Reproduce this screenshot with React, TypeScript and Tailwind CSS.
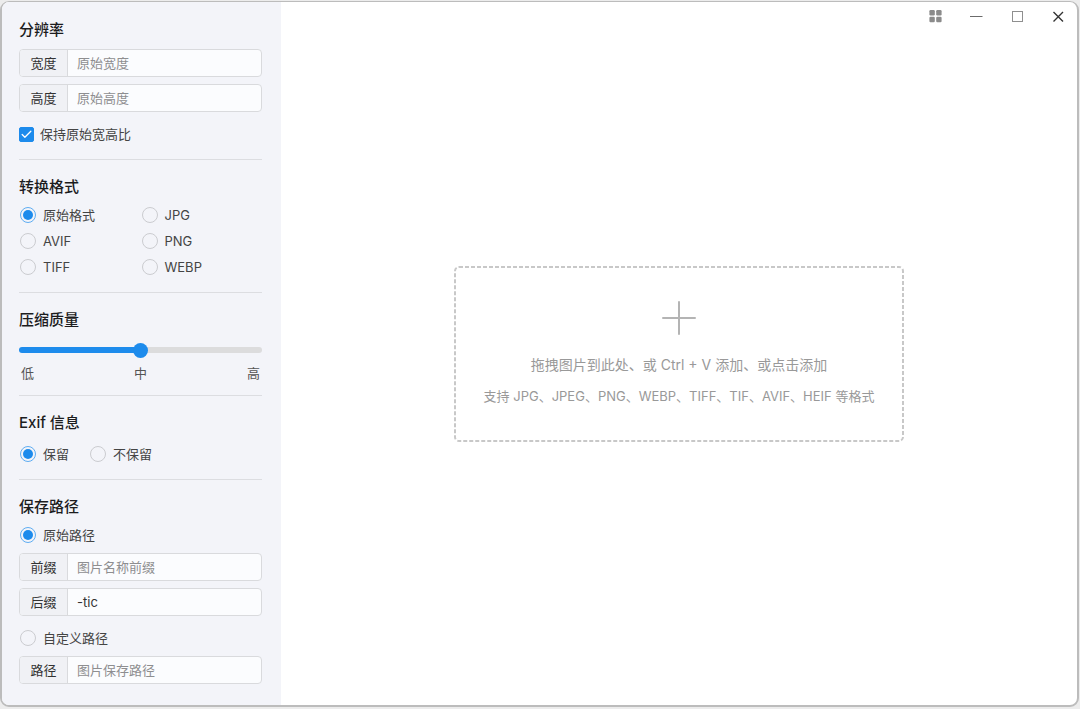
import React, { useState } from 'react';
import { Check } from 'lucide-react';

type Format = 'origin' | 'jpg' | 'avif' | 'png' | 'tiff' | 'webp';

const FORMATS: { value: Format; label: string }[] = [
  { value: 'origin', label: '原始格式' },
  { value: 'jpg', label: 'JPG' },
  { value: 'avif', label: 'AVIF' },
  { value: 'png', label: 'PNG' },
  { value: 'tiff', label: 'TIFF' },
  { value: 'webp', label: 'WEBP' },
];

interface SectionProps {
  title: string;
  last?: boolean;
  children: React.ReactNode;
}

const Section: React.FC<SectionProps> = ({ title, last, children }) => (
  <section className={last ? 'pt-[17px]' : 'border-b border-[#dcdde1] pt-[17px] pb-3'}>
    <h2 className="text-[15px] leading-5 font-medium text-[#1c1c1e]">{title}</h2>
    {children}
  </section>
);

interface FieldProps {
  id: string;
  label: string;
  placeholder?: string;
  value: string;
  onChange: (value: string) => void;
}

const Field: React.FC<FieldProps> = ({ id, label, placeholder, value, onChange }) => (
  <div className="flex h-7 overflow-hidden rounded border border-[#d9dadd] bg-[#fbfcfe]">
    <label
      htmlFor={id}
      className="flex w-12 shrink-0 items-center justify-center border-r border-[#d9dadd] bg-[#f0f1f5] text-[#333]"
    >
      {label}
    </label>
    <input
      id={id}
      type="text"
      value={value}
      placeholder={placeholder}
      onChange={(e) => onChange(e.target.value)}
      className="min-w-0 flex-1 bg-transparent px-[9px] text-[#333] outline-none placeholder:text-[#8e8e90]"
    />
  </div>
);

interface RadioProps {
  name: string;
  label: string;
  checked: boolean;
  onSelect: () => void;
}

const Radio: React.FC<RadioProps> = ({ name, label, checked, onSelect }) => (
  <label className="flex h-[26px] items-center gap-[7px] pl-px text-[#444]">
    <input
      type="radio"
      name={name}
      checked={checked}
      onChange={onSelect}
      className="size-4 shrink-0 appearance-none rounded-full border border-[#cbccd0] bg-clip-content p-[2px] checked:border-[#5fadf2] checked:bg-[#1d8bec]"
    />
    {label}
  </label>
);

const WindowButtons: React.FC = () => (
  <header className="flex h-7 shrink-0 justify-end">
    <button aria-label="更多" className="flex w-[41px] items-center justify-center">
      <svg width="16" height="14" viewBox="0 0 16 14" fill="#8b8b8b">
        <rect x="3.4" y="1" width="5.4" height="5.4" rx="1.2" />
        <rect x="10.2" y="1" width="5.4" height="5.4" rx="1.2" />
        <rect x="3.4" y="7.8" width="5.4" height="5.4" rx="1.2" />
        <rect x="10.2" y="7.8" width="5.4" height="5.4" rx="1.2" />
      </svg>
    </button>
    <button aria-label="最小化" className="flex w-[41px] items-center justify-center">
      <svg width="16" height="14" viewBox="0 0 16 14" stroke="#6b6b6b">
        <path d="M3 7.5h12.5" />
      </svg>
    </button>
    <button aria-label="最大化" className="flex w-[41px] items-center justify-center">
      <svg width="14" height="14" viewBox="0 0 14 14" fill="none" stroke="#8f8f8f">
        <rect x="3.5" y="2.5" width="10" height="10" />
      </svg>
    </button>
    <button aria-label="关闭" className="flex w-[41px] items-center justify-center">
      <svg width="14" height="14" viewBox="0 0 14 14" stroke="#333" strokeWidth="1.4">
        <path d="M3.5 3l9.5 9.5M13 3l-9.5 9.5" />
      </svg>
    </button>
  </header>
);

export default function App() {
  const [width, setWidth] = useState('');
  const [height, setHeight] = useState('');
  const [keepRatio, setKeepRatio] = useState(true);
  const [format, setFormat] = useState<Format>('origin');
  const [quality, setQuality] = useState(50);
  const [keepExif, setKeepExif] = useState(true);
  const [customPath, setCustomPath] = useState(false);
  const [prefix, setPrefix] = useState('');
  const [suffix, setSuffix] = useState('-tic');
  const [path, setPath] = useState('');

  return (
    <div className="flex min-h-screen bg-[#ececec] pt-px pr-px pb-[2px] font-['Inter','Noto_Sans_CJK_SC',sans-serif] text-[13px] leading-5">
      <div className="flex flex-1 overflow-hidden rounded-[9px] border-2 border-t-[1px] border-[#bcbcbc] bg-white">
        {/* Settings */}
        <aside className="w-[279px] shrink-0 bg-[#f3f4f9] pt-px pr-[19px] pb-5 pl-[17px]">
          <Section title="分辨率">
            <div className="mt-[9px] space-y-[7px]">
              <Field id="width" label="宽度" placeholder="原始宽度" value={width} onChange={setWidth} />
              <Field id="height" label="高度" placeholder="原始高度" value={height} onChange={setHeight} />
            </div>
            <label className="mt-[9px] flex h-[26px] items-center gap-1.5 text-[#444]">
              <span className="relative flex">
                <input
                  type="checkbox"
                  checked={keepRatio}
                  onChange={(e) => setKeepRatio(e.target.checked)}
                  className="size-[15px] appearance-none rounded-xs border border-[#cbccd0] checked:border-[#1d8bec] checked:bg-[#1d8bec]"
                />
                {keepRatio && (
                  <Check className="pointer-events-none absolute inset-0 m-auto size-[13px] text-white" strokeWidth={2.4} />
                )}
              </span>
              保持原始宽高比
            </label>
          </Section>

          <Section title="转换格式">
            <div className="mt-[5px] grid grid-cols-2">
              {FORMATS.map((item) => (
                <Radio
                  key={item.value}
                  name="format"
                  label={item.label}
                  checked={format === item.value}
                  onSelect={() => setFormat(item.value)}
                />
              ))}
            </div>
          </Section>

          <Section title="压缩质量">
            <input
              type="range"
              min={0}
              max={100}
              value={quality}
              aria-label="压缩质量"
              onChange={(e) => setQuality(Number(e.target.value))}
              style={{ backgroundSize: `${quality}% 100%` }}
              className="mt-[17px] block h-1.5 w-full appearance-none rounded-full bg-[#dcdcdd] bg-linear-to-r from-[#1d8bec] to-[#1d8bec] bg-no-repeat outline-none [&::-webkit-slider-thumb]:size-[15px] [&::-webkit-slider-thumb]:appearance-none [&::-webkit-slider-thumb]:rounded-full [&::-webkit-slider-thumb]:bg-[#1d8bec]"
            />
            <div className="mt-[10px] flex justify-between px-0.5 text-[#555]">
              <span>低</span>
              <span>中</span>
              <span>高</span>
            </div>
          </Section>

          <Section title="Exif 信息">
            <div className="mt-2 flex gap-5">
              <Radio name="exif" label="保留" checked={keepExif} onSelect={() => setKeepExif(true)} />
              <Radio name="exif" label="不保留" checked={!keepExif} onSelect={() => setKeepExif(false)} />
            </div>
          </Section>

          <Section title="保存路径" last>
            <div className="mt-[5px]">
              <Radio name="path" label="原始路径" checked={!customPath} onSelect={() => setCustomPath(false)} />
            </div>
            <div className="mt-[5px] mb-[9px] space-y-[7px]">
              <Field id="prefix" label="前缀" placeholder="图片名称前缀" value={prefix} onChange={setPrefix} />
              <Field id="suffix" label="后缀" value={suffix} onChange={setSuffix} />
            </div>
            <Radio name="path" label="自定义路径" checked={customPath} onSelect={() => setCustomPath(true)} />
            <div className="mt-[5px]">
              <Field id="path" label="路径" placeholder="图片保存路径" value={path} onChange={setPath} />
            </div>
          </Section>
        </aside>

        {/* Drop area */}
        <main className="flex min-w-0 flex-1 flex-col">
          <WindowButtons />
          <div className="flex flex-1 items-center justify-center pb-7">
            <button className="relative flex h-44 w-[450px] max-w-full flex-col items-center justify-center text-[#999]">
              {/* border-dashed leaves the gaps too wide at this weight */}
              <svg className="absolute inset-0 size-full" fill="none" stroke="#c8c8c8" strokeWidth="2" strokeDasharray="4 2">
                <rect className="h-[174px] w-[calc(100%-2px)]" x="1" y="1" rx="4" />
              </svg>
              <svg width="34" height="34" viewBox="0 0 34 34" stroke="#b4b4b4" strokeWidth="2" strokeLinecap="round">
                <path d="M17 1v32M1 17h32" />
              </svg>
              <span className="mt-5 text-sm">拖拽图片到此处、或 Ctrl + V 添加、或点击添加</span>
              <span className="mt-[11px]">支持 JPG、JPEG、PNG、WEBP、TIFF、TIF、AVIF、HEIF 等格式</span>
            </button>
          </div>
        </main>
      </div>
    </div>
  );
}
